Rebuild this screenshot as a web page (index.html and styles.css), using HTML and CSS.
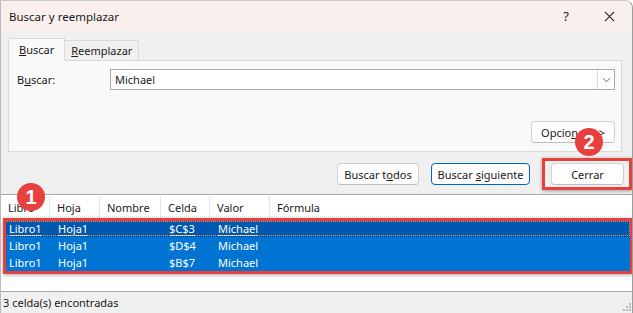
FILE: index.html
```html
<!DOCTYPE html>
<html lang="es">
<head>
  <meta charset="UTF-8">
  <title>Buscar y reemplazar</title>
  <link rel="stylesheet" href="styles.css">
</head>
<body>
  <div class="window">
    <div class="titlebar">
      <span class="title">Buscar y reemplazar</span>
      <div class="title-btns">
        <span class="help">?</span>
        <svg class="close" viewBox="0 0 12 12" width="12" height="12">
          <path d="M1 1L11 11M11 1L1 11" stroke="#1a1a1a" stroke-width="1.1" fill="none"></path>
        </svg>
      </div>
    </div>

    <div class="content">
      <div class="tabs">
        <div class="tab active"><u>B</u>uscar</div>
        <div class="tab"><u>R</u>eemplazar</div>
      </div>
      <div class="panel">
        <div class="field-row">
          <label class="field-label">B<u>u</u>scar:</label>
          <div class="combo">
            <span class="combo-value">Michael</span>
            <span class="combo-arrow">
              <svg viewBox="0 0 10 6" width="9" height="6">
                <path d="M1 1L5 5L9 1" stroke="#555" stroke-width="1" fill="none"></path>
              </svg>
            </span>
          </div>
        </div>
        <div class="panel-footer">
          <button class="btn">Opcio<u>n</u>es &gt;&gt;</button>
        </div>
      </div>
      <div class="actions">
        <button class="btn">Buscar t<u>o</u>dos</button>
        <button class="btn primary">Buscar <u>s</u>iguiente</button>
        <button class="btn close-btn">Cerrar</button>
      </div>
    </div>

    <div class="results">
      <div class="row head">
        <span class="c1">Libro</span>
        <span class="c2">Hoja</span>
        <span class="c3">Nombre</span>
        <span class="c4">Celda</span>
        <span class="c5">Valor</span>
        <span class="c6">Fórmula</span>
      </div>
      <div class="row sel focus">
        <span class="c1"><u>Libro1</u></span>
        <span class="c2"><u>Hoja1</u></span>
        <span class="c3"></span>
        <span class="c4"><u>$C$3</u></span>
        <span class="c5"><u>Michael</u></span>
        <span class="c6"></span>
      </div>
      <div class="row sel">
        <span class="c1">Libro1</span>
        <span class="c2">Hoja1</span>
        <span class="c3"></span>
        <span class="c4">$D$4</span>
        <span class="c5">Michael</span>
        <span class="c6"></span>
      </div>
      <div class="row sel">
        <span class="c1">Libro1</span>
        <span class="c2">Hoja1</span>
        <span class="c3"></span>
        <span class="c4">$B$7</span>
        <span class="c5">Michael</span>
        <span class="c6"></span>
      </div>
    </div>

    <div class="statusbar">
      <span>3 celda(s) encontradas</span>
      <svg class="grip" viewBox="0 0 10 10" width="10" height="10">
        <rect x="7" y="1" width="2" height="2" fill="#b8b8b8"></rect>
        <rect x="4" y="4" width="2" height="2" fill="#b8b8b8"></rect>
        <rect x="7" y="4" width="2" height="2" fill="#b8b8b8"></rect>
        <rect x="1" y="7" width="2" height="2" fill="#b8b8b8"></rect>
        <rect x="4" y="7" width="2" height="2" fill="#b8b8b8"></rect>
        <rect x="7" y="7" width="2" height="2" fill="#b8b8b8"></rect>
      </svg>
    </div>

    <!-- anotaciones -->
    <div class="mark mark-rows"></div>
    <div class="mark mark-close"></div>
    <div class="badge badge-1">1</div>
    <div class="badge badge-2">2</div>
  </div>
</body>
</html>
```

FILE: styles.css
```css
:root {
  --text: #1a1a1a;
  --title-bg: #f9efed;
  --body-bg: #f0f0f0;
  --panel-bg: #f9f9f9;
  --border: #d9d9d9;
  --sel: #0074d3;
  --sel-focus: #0058b0;
  --accent: #0067c0;
  --mark: #e8403f;
}

* {
  margin: 0;
  padding: 0;
  box-sizing: border-box;
}

body {
  width: 633px;
  height: 313px;
  overflow: hidden;
  font-family: "Noto Sans", "Open Sans", sans-serif;
  font-size: 11px;
  color: var(--text);
  background: #ffffff;
}

.window {
  position: relative;
  width: 633px;
  height: 313px;
  display: flex;
  flex-direction: column;
  background: var(--body-bg);
  border-left: 1px solid #b9b9b9;
  border-right: 1px solid #9c9c9c;
  border-top: 1px solid #c9c9c9;
  border-top-right-radius: 8px;
  overflow: hidden;
}

.titlebar {
  height: 30px;
  flex: none;
  display: flex;
  align-items: center;
  justify-content: space-between;
  padding-left: 8px;
  background: var(--title-bg);
}

.title {
  font-size: 11.5px;
}

.title-btns {
  display: flex;
  align-items: center;
  gap: 35px;
  padding-right: 17px;
}

.help {
  font-size: 13px;
}

.close {
  display: block;
  width: 11px;
  height: 11px;
}

.content {
  padding: 7px 10px 0 7px;
}

/* pestañas */
.tabs {
  display: flex;
  align-items: flex-end;
  height: 22px;
}

.tab {
  height: 20px;
  padding: 2px 6px 0;
  border: 1px solid var(--border);
  border-bottom: none;
  background: var(--body-bg);
  margin-left: -1px;
}

.tab.active {
  height: 23px;
  margin-left: 0;
  margin-bottom: -1px;
  padding: 3px 10px 0;
  background: var(--panel-bg);
  position: relative;
  z-index: 1;
}

.panel {
  height: 92px;
  border: 1px solid var(--border);
  background: var(--panel-bg);
  padding: 8px 6px 8px 8px;
  display: flex;
  flex-direction: column;
  justify-content: space-between;
}

.field-row {
  display: flex;
  align-items: center;
}

.field-label {
  width: 93px;
}

.combo {
  flex: 1;
  height: 21px;
  display: flex;
  align-items: center;
  border: 1px solid #a9a9a9;
  background: #fff;
}

.combo-value {
  flex: 1;
  padding-left: 4px;
}

.combo-arrow {
  width: 17px;
  height: 19px;
  display: flex;
  align-items: center;
  justify-content: center;
  border-left: 1px solid #dcdcdc;
}

.panel-footer {
  display: flex;
  justify-content: flex-end;
}

.btn {
  font-family: inherit;
  font-size: 11px;
  color: var(--text);
  height: 22px;
  padding: 0;
  white-space: nowrap;
  background: #fdfdfd;
  border: 1px solid #d0d0d0;
  border-bottom-color: #bdbdbd;
  border-radius: 4px;
}

.panel-footer .btn {
  width: 84px;
}

.actions {
  display: flex;
  justify-content: flex-end;
  gap: 12px;
  padding-top: 11px;
  margin-right: -2px;
  height: 41px;
}

.btn.primary {
  border: 1px solid var(--accent);
  width: 99px;
}

.close-btn {
  width: 73px;
  margin-left: 9px;
}

.actions .btn:first-child {
  width: 82px;
}

/* lista de resultados */
.results {
  flex: 1;
  background: #fff;
  border-top: 1px solid #a8a8a8;
  border-bottom: 1px solid #a8a8a8;
  margin-top: 1px;
  padding-top: 1px;
}

.row {
  display: flex;
  height: 17px;
  align-items: center;
  white-space: nowrap;
}

.row span {
  padding-left: 7px;
  flex: none;
}

.c1 { width: 49px; }
.c2 { width: 50px; }
.c3 { width: 61px; }
.c4 { width: 49px; }
.c5 { width: 60px; }
.c6 { flex: 1; }

.row.head {
  height: 23px;
  margin-bottom: 1px;
}

.row.head span {
  height: 23px;
  line-height: 23px;
  border-right: 1px solid #e5e5e5;
}

.row.head .c6 {
  border-right: none;
}

.row.sel {
  background: var(--sel);
  color: #fff;
  margin: 0 1px 0 3px;
}

.row.sel .c1 {
  width: 47px;
  padding-left: 5px;
}

.row.focus {
  background: var(--sel-focus);
  outline: 1px dotted #f0a040;
  outline-offset: -2px;
}

.row u {
  text-underline-offset: 2px;
}

.statusbar {
  height: 21px;
  flex: none;
  display: flex;
  align-items: center;
  justify-content: space-between;
  padding-left: 2px;
}

.grip {
  display: block;
  margin-top: 8px;
}

/* anotaciones */
.mark {
  position: absolute;
  border: 3px solid var(--mark);
  box-shadow: 0 1px 4px rgba(0, 0, 0, 0.35);
}

.mark-rows {
  left: 2px;
  top: 217px;
  width: 630px;
  height: 56px;
}

.mark-close {
  left: 541px;
  top: 157px;
  width: 90px;
  height: 32px;
}

.badge {
  position: absolute;
  width: 28px;
  height: 28px;
  border-radius: 50%;
  background: var(--mark);
  color: #fff;
  font-family: "Liberation Sans", Arial, sans-serif;
  font-weight: 700;
  font-size: 20px;
  line-height: 28px;
  text-align: center;
}

.badge-1 {
  left: 16px;
  top: 182px;
}

.badge-2 {
  left: 574px;
  top: 127px;
}
```
